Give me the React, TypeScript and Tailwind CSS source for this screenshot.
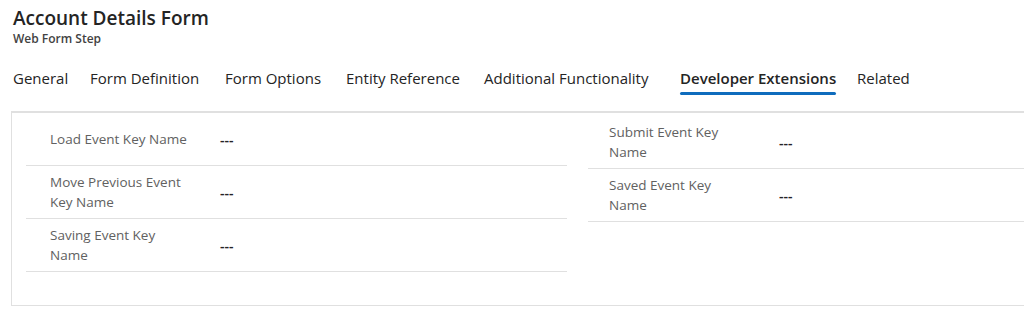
const tabs: [string, string][] = [
  ["General", "w-[77px]"],
  ["Form Definition", "w-[135px]"],
  ["Form Options", "w-[121px]"],
  ["Entity Reference", "w-[138px]"],
  ["Additional Functionality", "w-[196px]"],
  ["Developer Extensions", "w-[177px]"],
  ["Related", "w-[80px]"],
];

const leftRows = ["Load Event Key Name", "Move Previous Event Key Name", "Saving Event Key Name"];
const rightRows = ["Submit Event Key Name", "Saved Event Key Name"];

function FieldRow({ label, pad }: { label: string; pad: string }) {
  return (
    <div className={`h-[53px] flex items-center border-b border-[#e0e0e0] ${pad}`}>
      <div className="w-[170px] shrink-0 pr-[30px] text-[13.5px] leading-[20px] text-[#616161]">
        {label}
      </div>
      <div className="text-[14px] font-semibold text-[#242424]">---</div>
    </div>
  );
}

export default function App() {
  return (
    <main
      className="w-[1024px] h-[324px] overflow-hidden bg-white"
      style={{ fontFamily: '"Open Sans", "Noto Sans", sans-serif' }}
    >
      {/* Header */}
      <div className="pl-[13px] pt-[5px]">
        <h1 className="text-[19px] leading-[26px] font-semibold text-[#242424]">Account Details Form</h1>
        <p className="text-[12px] leading-[16px] font-semibold text-[#424242]">Web Form Step</p>
      </div>

      {/* Tabs */}
      <div className="flex pl-[13px] mt-[18px]">
        {tabs.map(([t, w]) => {
          const active = t === "Developer Extensions";
          return (
            <div key={t} className={`${w} shrink-0`}>
              <div className="inline-flex flex-col">
                <span
                  className={`text-[15px] leading-[26px] whitespace-nowrap text-[#242424] ${
                    active ? "font-semibold" : ""
                  }`}
                >
                  {t}
                </span>
                <span className={`h-[3px] mt-[1px] rounded-full ${active ? "bg-[#0f6cbd]" : ""}`} />
              </div>
            </div>
          );
        })}
      </div>

      {/* Panel */}
      <div className="ml-[11px] mt-[16px] w-[1140px] h-[195px] border border-[#e0e0e0] border-t-2 flex gap-[21px] pl-[14px]">
        <div className="w-[541px]">
          {leftRows.map((r) => (
            <FieldRow key={r} label={r} pad="pl-[24px]" />
          ))}
        </div>
        <div className="w-[541px] pt-[3px]">
          {rightRows.map((r) => (
            <FieldRow key={r} label={r} pad="pl-[21px]" />
          ))}
        </div>
      </div>
    </main>
  );
}
